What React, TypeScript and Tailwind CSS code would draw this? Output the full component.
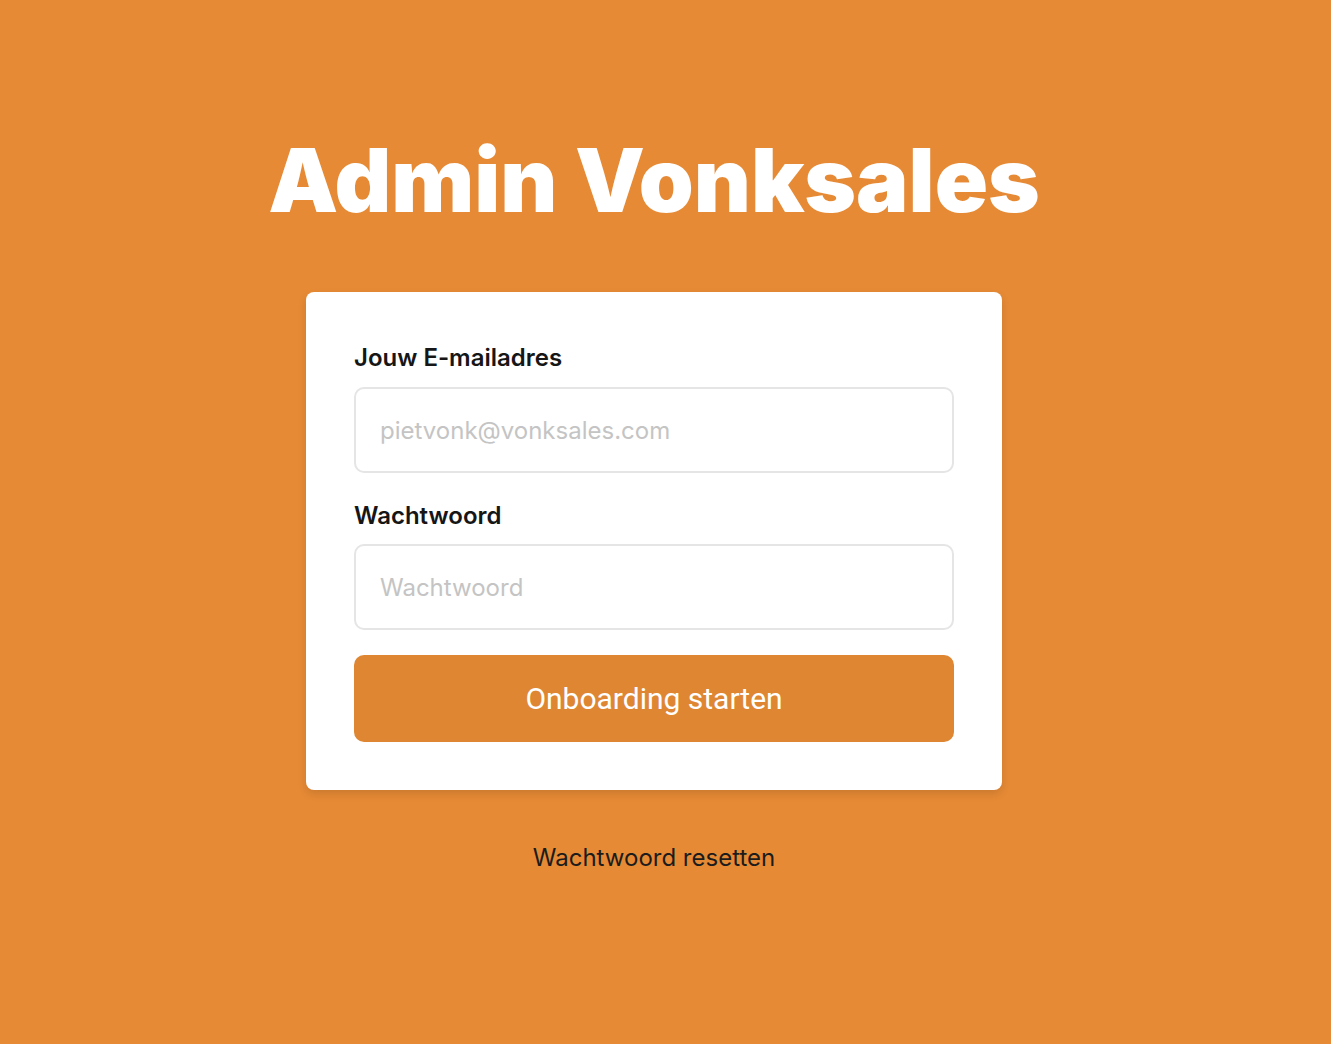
export default function App() {
  return (
    <div className="min-h-screen w-full bg-[#e68a35] pr-[23px] flex flex-col items-center" style={{ fontFamily: "Inter, 'Noto Sans', sans-serif" }}>
      <h1 className="mt-[132px] text-[88px] leading-[96px] font-black text-white">Admin Vonksales</h1>
      <div className="mt-[64px] w-[696px] bg-white rounded-lg shadow-[0_4px_8px_rgba(0,0,0,0.12)] p-12 flex flex-col">
        <label className="mt-[2px] text-[24px] leading-[32px] font-semibold text-[#161616]">Jouw E-mailadres</label>
        <input
          type="email"
          placeholder="pietvonk@vonksales.com"
          className="mt-[13px] h-[86px] w-full rounded-[10px] border-2 border-[#e5e5e5] px-6 text-[24px] text-[#333] placeholder:text-[#c4c4c4] outline-none"
        />
        <label className="mt-[27px] text-[24px] leading-[32px] font-semibold text-[#161616]">Wachtwoord</label>
        <input
          type="password"
          placeholder="Wachtwoord"
          className="mt-[12px] h-[86px] w-full rounded-[10px] border-2 border-[#e5e5e5] px-6 text-[24px] text-[#333] placeholder:text-[#c4c4c4] outline-none"
        />
        <button
          className="mt-[25px] h-[87px] w-full rounded-[10px] bg-[#df8632] text-white text-[30px]"
          style={{ fontFamily: "Roboto, sans-serif" }}
        >
          Onboarding starten
        </button>
      </div>
      <a className="mt-[52px] text-[24px] leading-[32px] text-[#1c1c1c]">Wachtwoord resetten</a>
    </div>
  );
}
